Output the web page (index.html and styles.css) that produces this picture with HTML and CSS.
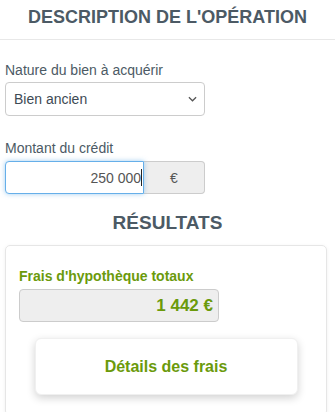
FILE: index.html
```html
<!DOCTYPE html>
<html lang="fr">
<head>
<meta charset="utf-8">
<title>Description de l'opération</title>
<link rel="stylesheet" href="styles.css">
</head>
<body>
<h1 class="section-title">DESCRIPTION DE L'OPÉRATION</h1>
<div class="form">
  <label class="field-label" for="nature">Nature du bien à acquérir</label>
  <div class="select-wrap">
    <select id="nature" class="select">
      <option>Bien ancien</option>
      <option>Bien neuf</option>
    </select>
    <svg class="chevron" viewBox="0 0 10 6" width="9" height="6"><path d="M1 1 L5 5 L9 1" fill="none" stroke="#555" stroke-width="1.4"/></svg>
  </div>

  <label class="field-label second" for="montant">Montant du crédit</label>
  <div class="input-group">
    <div class="amount-input"><span class="amount-text">250 000</span><span class="caret"></span></div>
    <span class="addon">€</span>
  </div>
</div>

<h2 class="results-title">RÉSULTATS</h2>
<div class="card">
  <div class="result-label">Frais d'hypothèque totaux</div>
  <div class="result-value">1 442 €</div>
  <div class="btn-row">
    <button class="details-btn">Détails des frais</button>
  </div>
</div>
</body>
</html>
```

FILE: styles.css
```css
html, body {
  margin: 0;
  padding: 0;
  background: #fff;
  font-family: "Liberation Sans", Arial, sans-serif;
  color: #4c5a65;
}
.section-title {
  margin: 0;
  padding: 7px 0 12px;
  font-size: 18px;
  line-height: 20px;
  font-weight: bold;
  text-align: center;
  color: #4c5a65;
  border-bottom: 1px solid #e8e8e8;
}
.form {
  padding: 20px 0 0 5px;
}
.field-label {
  display: block;
  font-size: 14px;
  line-height: 20px;
  color: #4c5a65;
  margin-bottom: 2px;
}
.field-label.second {
  margin-top: 22px;
  margin-bottom: 3px;
}
.select-wrap {
  position: relative;
  width: 200px;
}
.select {
  display: block;
  width: 200px;
  height: 34px;
  margin: 0;
  padding: 0 8px;
  font-family: "Liberation Sans", Arial, sans-serif;
  font-size: 14px;
  color: #3e4a54;
  background: #fff;
  border: 1px solid #ccc;
  border-radius: 4px;
  -webkit-appearance: none;
  appearance: none;
}
.chevron {
  position: absolute;
  right: 8px;
  top: 14px;
  pointer-events: none;
}
.input-group {
  display: flex;
  width: 200px;
  height: 33px;
}
.amount-input {
  width: 139px;
  box-sizing: border-box;
  border: 1px solid #66afe9;
  border-radius: 4px 0 0 4px;
  box-shadow: 0 0 5px rgba(102, 175, 233, 0.6);
  display: flex;
  align-items: center;
  justify-content: flex-end;
  padding-right: 1px;
  font-size: 14px;
  color: #555;
  position: relative;
  z-index: 1;
  background: #fff;
}
.caret {
  display: inline-block;
  width: 1px;
  height: 17px;
  background: #222;
  margin-left: 0;
}
.addon {
  flex: 1;
  display: flex;
  align-items: center;
  justify-content: center;
  background: #eee;
  border: 1px solid #ccc;
  border-left: none;
  border-radius: 0 4px 4px 0;
  font-size: 14px;
  color: #555;
}
.results-title {
  margin: 18px 0 11px;
  font-size: 19px;
  line-height: 22px;
  font-weight: bold;
  text-align: center;
  color: #4c5a65;
}
.card {
  margin: 0 8px 0 5px;
  border: 1px solid #e6e6e6;
  border-radius: 5px;
  box-shadow: 0 1px 4px rgba(0, 0, 0, 0.06);
  padding: 21px 13px 20px;
}
.result-label {
  font-size: 14px;
  line-height: 18px;
  font-weight: bold;
  color: #6b9a0b;
  margin-bottom: 4px;
}
.result-value {
  width: 200px;
  height: 33px;
  box-sizing: border-box;
  background: #eee;
  border: 1px solid #ccc;
  border-radius: 4px;
  display: flex;
  align-items: center;
  justify-content: flex-end;
  padding-right: 5px;
  font-size: 17px;
  font-weight: bold;
  color: #6b9a0b;
}
.btn-row {
  display: flex;
  justify-content: center;
  margin-top: 16px;
}
.details-btn {
  width: 263px;
  height: 57px;
  background: #fff;
  border: 1px solid #f0f0f0;
  border-radius: 6px;
  box-shadow: 0 3px 8px rgba(0, 0, 0, 0.18);
  font-family: "Liberation Sans", Arial, sans-serif;
  font-size: 16px;
  font-weight: bold;
  color: #6b9a0b;
  cursor: pointer;
}
```
